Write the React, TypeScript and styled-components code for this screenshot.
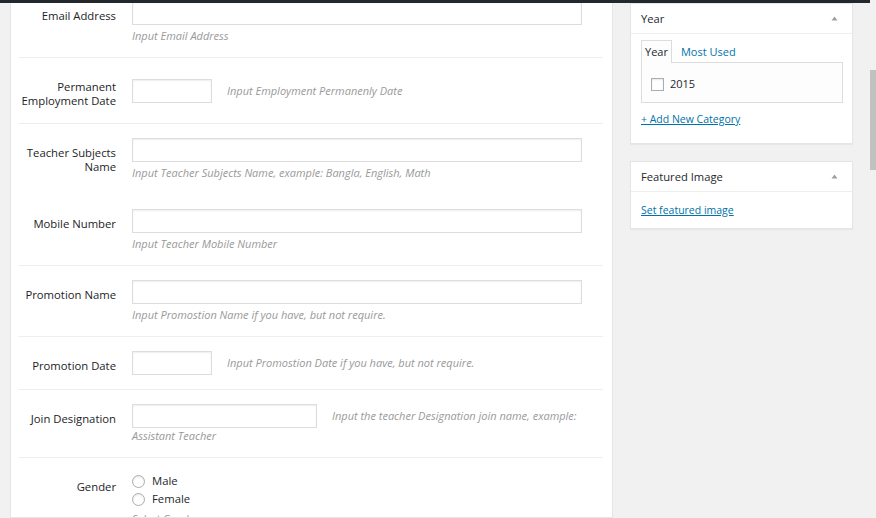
import styled, { createGlobalStyle } from 'styled-components';

const GlobalStyle = createGlobalStyle`
html, body {
  margin: 0;
  padding: 0;
  height: 100%;
  overflow: hidden;
}
body {
  background: #f1f1f1;
  color: #23282d;
  font-family: "Open Sans", "Liberation Sans", sans-serif;
}
#root {
  height: 100%;
}
`;

const Page = styled.div`
display: flex;
height: 518px;
`;

const Screen = styled.div`
display: flex;
flex: 1;
flex-direction: column;
min-width: 0;
`;

const AdminBar = styled.div`
background: #23282d;
flex-shrink: 0;
height: 3px;
`;

const Columns = styled.div`
align-items: flex-start;
display: flex;
flex: 1;
gap: 17px;
overflow: hidden;
padding-left: 10px;
`;

const MainPanel = styled.div`
align-self: stretch;
background: #fff;
border: 1px solid #e5e5e5;
border-top: 0;
box-sizing: border-box;
overflow: hidden;
padding: 0 9px 0 8px;
width: 603px;
`;

const FormTable = styled.div`
margin-top: -16px;
`;

const Row = styled.div<{ $plain?: boolean }>`
border-bottom: 1px solid ${(p) => (p.$plain ? 'transparent' : '#eee')};
column-gap: 16px;
display: grid;
grid-template-columns: 97px 1fr;
`;

const Label = styled.div`
align-self: start;
color: #1d2327;
font-size: 11.3px;
font-weight: 500;
line-height: 14px;
padding: 22px 0 15px;
text-align: right;
`;

const Field = styled.div`
align-self: center;
font-size: 11px;
line-height: 14px;
padding: 14px 0;
`;

const TextInput = styled.input<{ $w: number }>`
background: #fff;
border: 1px solid #ddd;
border-radius: 0;
box-shadow: inset 0 1px 2px rgba(0, 0, 0, 0.07);
box-sizing: border-box;
font: inherit;
height: 24px;
margin: 0;
outline: none;
padding: 2px 6px;
vertical-align: middle;
width: ${(p) => p.$w}px;
`;

const Desc = styled.p`
color: #999;
font-size: 11px;
font-style: italic;
line-height: 15px;
margin: 3px 0 0;
`;

const InlineDesc = styled.span`
color: #999;
font-size: 11px;
font-style: italic;
margin-left: 15px;
vertical-align: middle;
`;

const RadioList = styled.div`
display: flex;
flex-direction: column;
`;

const RadioLine = styled.label`
align-items: center;
color: #23282d;
display: flex;
font-size: 11.3px;
gap: 7px;
height: 18px;
`;

const Radio = styled.span`
background: #fff;
border: 1px solid #a9aeb3;
border-radius: 50%;
box-shadow: inset 0 1px 2px rgba(0, 0, 0, 0.1);
box-sizing: border-box;
height: 13px;
width: 13px;
`;

const Sidebar = styled.div`
display: flex;
flex-direction: column;
gap: 17px;
width: 223px;
`;

const Box = styled.div`
background: #fff;
border: 1px solid #e5e5e5;
box-shadow: 0 1px 1px rgba(0, 0, 0, 0.04);
`;

const BoxHeader = styled.div`
align-items: center;
border-bottom: 1px solid #eee;
color: #23282d;
display: flex;
font-size: 11.2px;
height: 29px;
justify-content: space-between;
padding: 0 14px 0 10px;
`;

const BoxBody = styled.div<{ $pad: string }>`
font-size: 11px;
line-height: 16px;
padding: ${(p) => p.$pad};
`;

const Tabs = styled.div`
align-items: flex-end;
display: flex;
gap: 5px;
`;

const Tab = styled.div<{ $active?: boolean }>`
background: ${(p) => (p.$active ? '#fdfdfd' : 'transparent')};
border: 1px solid ${(p) => (p.$active ? '#ddd' : 'transparent')};
border-bottom: 0;
color: ${(p) => (p.$active ? '#23282d' : '#0073aa')};
font-size: 11px;
height: 22px;
line-height: 21px;
margin-bottom: -1px;
padding: 0 3px;
position: relative;
z-index: 1;
`;

const TabPanel = styled.div`
background: #fdfdfd;
border: 1px solid #ddd;
padding: 12px 9px 9px;
`;

const CheckLine = styled.label`
align-items: center;
color: #23282d;
display: flex;
font-size: 11px;
gap: 6px;
height: 18px;
`;

const Checkbox = styled.span`
background: #fff;
border: 1px solid #a9aeb3;
box-shadow: inset 0 1px 2px rgba(0, 0, 0, 0.1);
box-sizing: border-box;
height: 13px;
width: 13px;
`;

const BoxLink = styled.a<{ $top?: number }>`
color: #0073aa;
display: block;
font-size: 10.5px;
line-height: 16px;
margin-top: ${(p) => p.$top || 0}px;
text-decoration: underline;
width: max-content;
`;

const Scrollbar = styled.div`
background: #f1f1f1;
display: flex;
flex-direction: column;
width: 6px;
`;

const Thumb = styled.div`
background: #c1c1c1;
height: 100px;
margin-top: 70px;
`;

function Toggle() {
  return (
    <svg width="7" height="5" viewBox="0 0 7 5">
      <path d="M3.5 0.5 L6.5 4.5 L0.5 4.5 Z" fill="#9aa0a6" />
    </svg>
  );
}

const wide = 450;

function App() {
  return (
    <>
      <GlobalStyle />
      <Page>
        <Screen>
          <AdminBar />
          <Columns>
            <MainPanel>
              <FormTable>
                <Row>
                  <Label>Email Address</Label>
                  <Field>
                    <TextInput $w={wide} />
                    <Desc>Input Email Address</Desc>
                  </Field>
                </Row>
                <Row>
                  <Label>Permanent Employment Date</Label>
                  <Field>
                    <TextInput $w={80} />
                    <InlineDesc>Input Employment Permanenly Date</InlineDesc>
                  </Field>
                </Row>
                <Row $plain>
                  <Label>Teacher Subjects Name</Label>
                  <Field>
                    <TextInput $w={wide} />
                    <Desc>Input Teacher Subjects Name, example: Bangla, English, Math</Desc>
                  </Field>
                </Row>
                <Row>
                  <Label>Mobile Number</Label>
                  <Field>
                    <TextInput $w={wide} />
                    <Desc>Input Teacher Mobile Number</Desc>
                  </Field>
                </Row>
                <Row>
                  <Label>Promotion Name</Label>
                  <Field>
                    <TextInput $w={wide} />
                    <Desc>Input Promostion Name if you have, but not require.</Desc>
                  </Field>
                </Row>
                <Row>
                  <Label>Promotion Date</Label>
                  <Field>
                    <TextInput $w={80} />
                    <InlineDesc>Input Promostion Date if you have, but not require.</InlineDesc>
                  </Field>
                </Row>
                <Row>
                  <Label>Join Designation</Label>
                  <Field>
                    <TextInput $w={185} />
                    <InlineDesc>Input the teacher Designation join name, example: Assistant Teacher</InlineDesc>
                  </Field>
                </Row>
                <Row $plain>
                  <Label>Gender</Label>
                  <Field>
                    <RadioList>
                      <RadioLine><Radio />Male</RadioLine>
                      <RadioLine><Radio />Female</RadioLine>
                    </RadioList>
                    <Desc>Select Gender</Desc>
                  </Field>
                </Row>
              </FormTable>
            </MainPanel>

            <Sidebar>
              <Box>
                <BoxHeader>
                  Year
                  <Toggle />
                </BoxHeader>
                <BoxBody $pad="6px 9px 16px 10px">
                  <Tabs>
                    <Tab $active>Year</Tab>
                    <Tab>Most Used</Tab>
                  </Tabs>
                  <TabPanel>
                    <CheckLine><Checkbox />2015</CheckLine>
                  </TabPanel>
                  <BoxLink $top={8}>+ Add New Category</BoxLink>
                </BoxBody>
              </Box>
              <Box>
                <BoxHeader>
                  Featured Image
                  <Toggle />
                </BoxHeader>
                <BoxBody $pad="10px 10px 10px">
                  <BoxLink>Set featured image</BoxLink>
                </BoxBody>
              </Box>
            </Sidebar>
          </Columns>
        </Screen>
        <Scrollbar>
          <Thumb />
        </Scrollbar>
      </Page>
    </>
  );
}

export default App;
